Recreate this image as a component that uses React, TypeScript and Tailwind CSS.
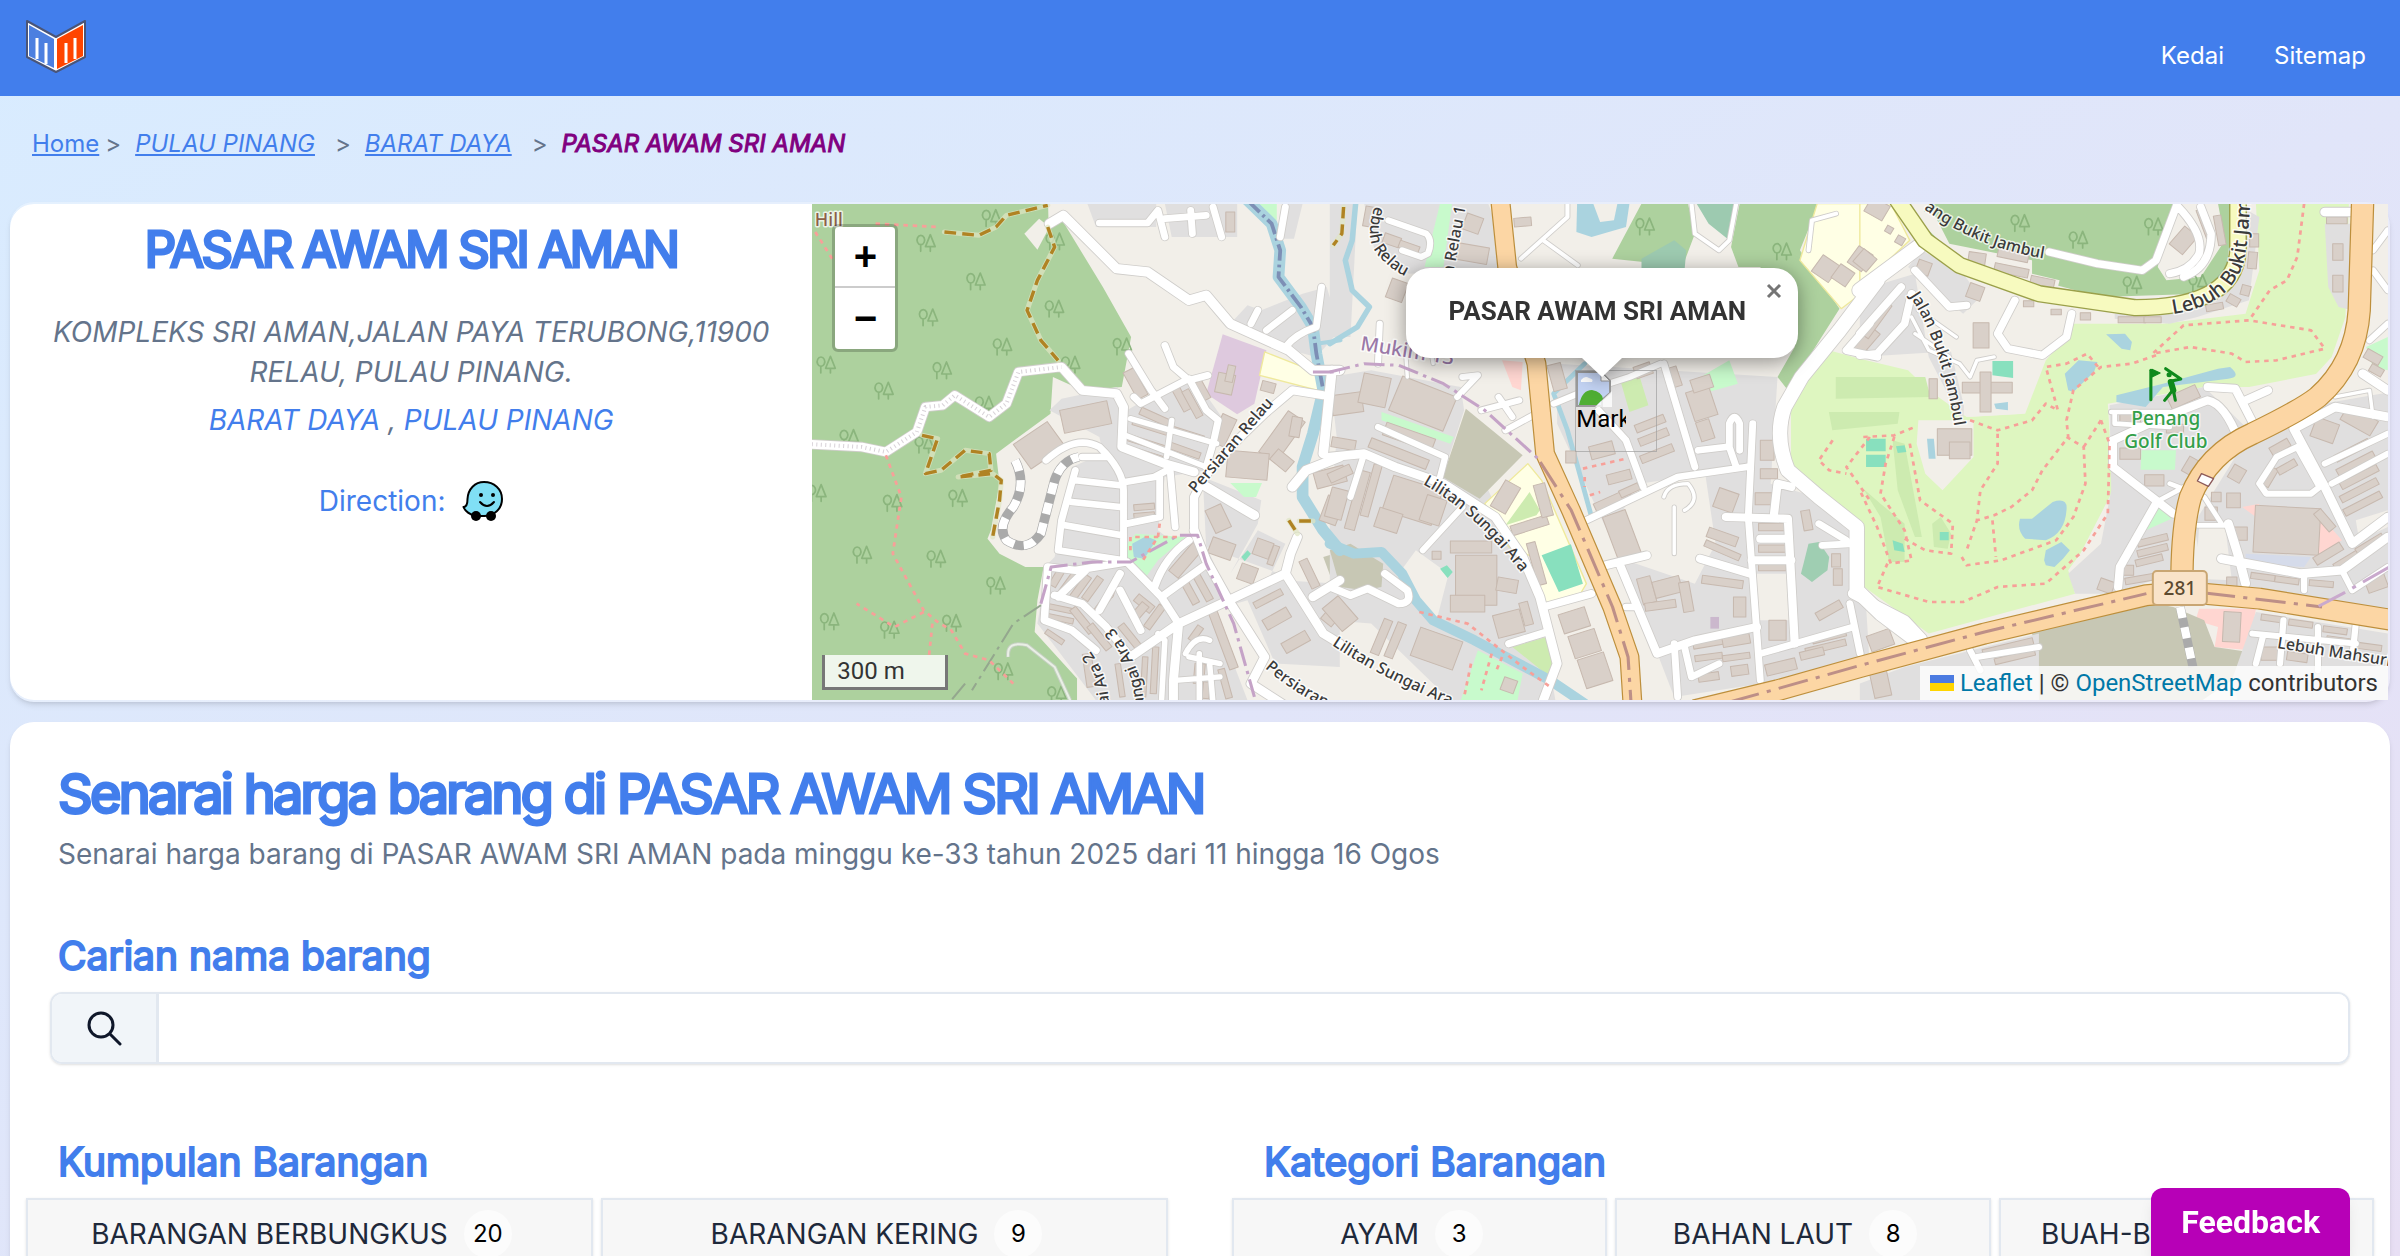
import React, { useState } from 'react';

type Area = { at: number; fill: string; d: string; stroke?: string };
type Road = { at: number; w: number; d: string };
type Block = [number, number, number, number, number];

// The map is drawn in three sheets, side by side
const WEST = 0;
const MID = 1539;
const EAST = 3078;

const FOREST = '#add19e';
const GOLF = '#def6c0';
const HOUSING = '#e0dfdf';
const WATER = '#aad3df';
const PITCH = '#88e0be';
const PARK = '#c8facc';
const GRASS = '#cdebb0';
const SCHOOL = '#ffffe5';
const BROWN = '#c7c7b4';
const RETAIL = '#ffd6d1';

const areas: Area[] = [
  { at: WEST, fill: FOREST, d: 'M0 0H720L722 85L765 95L880 290L962 440L935 590L820 600L735 560L728 670L570 790L580 880L555 1020L545 1045L580 1090L655 1130H708L690 1230L682 1325L805 1465V1560H0Z' },
  { at: WEST, fill: '#f2efe9', d: 'M652 130L695 85L725 110L690 178Z' },
  { at: WEST, fill: HOUSING, d: 'M835 40H1035V110H860ZM1060 40H1270V140H1080ZM1410 40H1460L1435 145H1385ZM1250 400L1300 345L1340 360L1460 310L1530 290L1568 420L1500 500L1390 470Z' },
  { at: WEST, fill: HOUSING, d: 'M725 660L760 625L920 590L950 660L1050 600L1150 570L1225 680L1180 840L1060 860L1040 1020L1090 1060L1160 1020L1250 1230L1400 1170L1568 1180V1430L1380 1420L1300 1230L1200 1260L1300 1530H860L690 1300L720 1120L740 1100L790 830L880 790L870 740Z' },
  { at: WEST, fill: HOUSING, d: 'M1170 860L1340 930L1330 1000L1250 1150L1330 1020L1410 1060L1350 1190L1420 1160L1180 1070Z' },
  { at: WEST, fill: '#dec9de', d: 'M1228 432L1355 480L1320 640L1270 672L1180 610Z' },
  { at: WEST, fill: SCHOOL, d: 'M1350 485L1510 550L1505 600L1335 555Z', stroke: '#efe99c' },
  { at: WEST, fill: PARK, d: 'M1320 40H1385V90L1360 95ZM950 1060L975 1030L1120 1040L1040 1110L1005 1160L950 1100ZM1250 878H1342L1325 920H1290Z' },
  { at: WEST, fill: BROWN, d: 'M1520 1100L1568 1085V1170H1545Z' },
  { at: WEST, fill: WATER, d: 'M965 1060L1005 1038L1035 1050L1000 1105L970 1100Z' },
  { at: WEST, fill: PITCH, d: 'M1282 1100L1300 1080L1310 1090L1292 1113Z' },

  { at: MID, fill: HOUSING, d: 'M100 40H460L530 230L420 240L230 250L130 180ZM0 560L120 540L380 590L390 660L330 850L460 900L600 1200L660 1560H380L120 1300L0 1290V1000L20 740ZM660 520L1300 560L1280 880L1540 960L1568 1430L1000 1520L850 1120L660 700Z' },
  { at: MID, fill: '#f2efe9', d: 'M250 1080L345 1150L310 1290L200 1150ZM900 880L1090 850L1120 1060L1060 1180L860 1110L820 1010ZM1240 1150H1340V1290H1240Z' },
  { at: MID, fill: HOUSING, d: 'M0 40H80L60 440H0Z' },
  { at: MID, fill: PARK, d: 'M320 40H355L330 230H275Z' },
  { at: MID, fill: FOREST, d: 'M905 40H1420L1365 180L1480 355L1330 600L1300 560L1350 470L1250 230H1050L820 205Z' },
  { at: MID, fill: '#f2efe9', d: 'M1040 40H1190L1165 170L1190 240H1020L1060 130Z' },
  { at: MID, fill: '#9dcab0', d: 'M1065 40H1175L1160 150L1100 100ZM905 205L1000 150L1035 180L1030 240H905Z' },
  { at: MID, fill: SCHOOL, d: 'M1415 40H1568V290L1485 355L1365 210Z', stroke: '#efe99c' },
  { at: MID, fill: WATER, d: 'M718 40H870L860 110L760 140L716 125Z' },
  { at: MID, fill: '#f2efe9', d: 'M765 40H835L825 90L785 95Z' },
  { at: MID, fill: BROWN, d: 'M395 655L560 795L435 925L328 860ZM0 1080L60 1060L155 1120L150 1190L100 1200L30 1190Z' },
  { at: MID, fill: SCHOOL, d: 'M575 820L615 870L745 1180L725 1215L620 1245L590 1100L520 1070L450 940Z', stroke: '#efe99c' },
  { at: MID, fill: GRASS, d: 'M580 905L610 960L600 975L510 1005ZM530 1370L630 1340L655 1420L650 1470ZM845 575L900 560L925 645L870 665Z' },
  { at: MID, fill: PITCH, d: 'M615 1095L700 1062L735 1180L665 1205ZM320 1135L340 1125L357 1145L342 1163Z' },
  { at: MID, fill: PARK, d: 'M1085 555L1160 510L1185 580L1100 605ZM150 665L360 740L350 760L150 690ZM430 1380L560 1450L545 1530H380Z' },
  { at: MID, fill: '#9fceb2', d: 'M1390 1060L1420 1055L1450 1100L1445 1140L1400 1175L1368 1150Z' },
  { at: MID, fill: '#cbb8cd', d: 'M1105 1280H1130V1315H1105Z' },
  { at: MID, fill: RETAIL, d: 'M500 510L560 515L555 600L530 590Z' },

  { at: EAST, fill: GOLF, d: 'M-90 480L0 505L140 540L200 600L310 680L470 670L510 510L610 400L880 400L1120 370L1160 240L1150 40H1420L1410 380L1370 500L1290 590L1000 590L720 640L735 900L640 1090L605 1140L625 1210L200 1330L0 1180L-10 1010L-200 880L-200 640Z' },
  { at: EAST, fill: '#cdebb0', d: 'M-70 560L190 560L205 620L-70 625ZM-90 665L115 665L110 700L-80 720ZM95 750L130 760L180 1040H160L110 900ZM10 895L60 940L130 1000V1115H85L60 980ZM210 1000L235 980L265 1030L255 1075L215 1070Z' },
  { at: EAST, fill: FOREST, d: 'M200 40H1085L1060 290L990 310L700 320L480 260L280 180L160 110Z' },
  { at: EAST, fill: '#f2efe9', d: 'M910 40H1040L1060 150L990 260L890 270L865 230ZM150 70L210 60L260 160L500 210L500 250L580 270L570 310L480 280L280 200Z' },
  { at: EAST, fill: SCHOOL, d: 'M0 40H90L145 150L0 290Z', stroke: '#efe99c' },
  { at: EAST, fill: HOUSING, d: 'M140 230L180 180L300 250L350 320L300 370ZM0 300L160 250L200 500L300 700L310 480L0 500ZM1350 100H1430V360L1390 350L1360 290ZM1090 40L1160 80L1130 330L980 380L900 400L740 385L740 370L960 350L1090 280Z' },
  { at: EAST, fill: '#f2efe9', d: 'M395 400L450 320L620 350L610 430L540 510L480 670L310 680L250 420L300 380ZM170 690L330 690L330 800L240 900L190 850L165 760ZM1130 590L1380 540L1300 640L1140 720Z' },
  { at: EAST, fill: HOUSING, d: 'M725 645L1000 590L1130 720L960 830L905 1150L740 1210L625 1210L605 1150L700 1060L730 900Z' },
  { at: EAST, fill: HOUSING, d: 'M1090 800L1290 650L1568 600V1300L1000 1180L970 1000Z' },
  { at: EAST, fill: '#f2efe9', d: 'M985 1010L1060 1000L1080 1170L975 1165ZM1440 990L1533 960V1010L1450 1050Z' },
  { at: EAST, fill: WATER, d: 'M715 432L770 430L790 455L785 480L760 475ZM595 550L635 510L690 515L680 545L620 605L605 600ZM745 615L880 580L1040 535L1075 530Q1110 560 1070 565L880 590L830 650L745 635ZM465 985L500 985L560 935Q605 920 600 960Q595 1030 540 1050L480 1045Q455 1020 465 985ZM535 1110L540 1080L585 1055L610 1080L590 1105L565 1130L540 1125ZM195 745H215L220 805H200ZM390 640L430 635V660L395 655Z' },
  { at: EAST, fill: PITCH, d: 'M385 512H445V563L385 555ZM18 745H75V783H18ZM18 793H75V830H18ZM105 768L130 765L135 785L110 788ZM95 1050L125 1060L130 1085L100 1080ZM232 1025H258V1050H232Z' },
  { at: EAST, fill: PARK, d: 'M818 780H918L915 838H815ZM870 940L905 985L830 1020ZM1470 470L1533 440V540L1490 530Z' },
  { at: EAST, fill: RETAIL, d: 'M985 1255H1150L1130 1380L1030 1370L1040 1310L975 1290ZM1340 980L1400 1050L1320 1100ZM1110 950L1160 940L1150 980Z' },
  { at: EAST, fill: '#d5dbea', d: 'M1120 1090L1310 1100L1290 1130L1120 1120Z' },
  { at: EAST, fill: BROWN, d: 'M500 1325L860 1240L910 1250L1000 1290L1030 1370L1130 1385L1080 1470L980 1540H520Z' },
  { at: EAST, fill: HOUSING, d: 'M130 1430L520 1330V1430L520 1540H0V1480ZM1150 1265L1533 1330V1540H1100L1080 1470Z' },
];

const waterways = [
  { at: WEST, w: 34, d: 'M1300 30L1370 100L1395 180L1390 260L1455 350L1490 410L1500 490L1520 600L1490 730L1460 830L1460 920L1520 1020L1568 1080' },
  { at: WEST, w: 12, d: 'M1500 460L1570 450' },
  { at: MID, w: 16, d: 'M75 40L65 150L45 210L65 300L115 350L80 410L0 460' },
  { at: MID, w: 30, d: 'M0 1060L70 1090L150 1085L210 1150L250 1230L300 1290L420 1350L640 1470L740 1540' },
  { at: MID, w: 14, d: 'M740 520L650 610L690 720L720 830L760 980' },
];

const roads: Road[] = [
  { at: WEST, w: 26, d: 'M35 762L180 770L250 785L340 725L365 650L415 645L450 615L550 680L600 640L635 545L760 530L820 600L920 610L940 650L935 770L1060 820L1145 845' },
  { at: WEST, w: 28, d: 'M725 100L765 75L920 235L1010 245L1130 330L1180 315L1250 400L1420 480L1490 540H1568' },
  { at: WEST, w: 20, d: 'M870 98H1010L1040 60L1060 140M1135 60L1140 130M1200 50L1225 140M1060 85L1180 75M1410 50L1395 140' },
  { at: WEST, w: 20, d: 'M1310 400L1330 360M1355 420L1430 360M1410 470Q1440 430 1500 410L1515 290M1060 465L1085 530L1130 570L1185 555M955 490L1020 600L1060 655M970 620L990 640L1130 565L1180 660L1215 690L1200 760L1180 830' },
  { at: WEST, w: 24, d: 'M1145 1020L1145 920L1165 880L1190 840L1280 740L1350 670L1430 600L1520 615' },
  { at: WEST, w: 28, d: 'M1545 540L1520 790M1430 890L1470 840L1568 800M1165 880L1320 975' },
  { at: WEST, w: 16, d: 'M960 685L1210 760M945 735L1180 830M1080 690L1065 800' },
  { at: WEST, w: 20, d: 'M715 810Q800 730 870 770Q940 840 940 900V1110L750 1080L760 990L800 840M820 800L890 800M800 870L930 885M790 935L930 950M770 1005L935 1035M945 875L1030 860L1075 835L1090 1010M1045 860V980L950 1000' },
  { at: WEST, w: 22, d: 'M720 1130L800 1140L950 1115L1050 1220L1100 1300M720 1130L710 1290L790 1320L860 1380M740 1215L820 1240L890 1310L960 1400M830 1140L750 1220M930 1150L870 1260M930 1200L990 1320M1050 1220L1170 1130M1030 1190Q1060 1100 1130 1050' },
  { at: WEST, w: 26, d: 'M1145 1020L1180 1110L1245 1230L1350 1400L1310 1480L1400 1540M1245 1230L1410 1150L1425 1090L1445 1040M1410 1150L1520 1330L1568 1360M1245 1230L1100 1300L1085 1470V1540M1100 1300L960 1400M1490 1220L1568 1170' },
  { at: WEST, w: 16, d: 'M1120 1390Q1150 1330 1190 1350M1130 1400L1220 1420M1160 1540V1390M1200 1540L1190 1420M1040 1330L1060 1350L1050 1540M1090 1470L1220 1460' },

  { at: MID, w: 18, d: 'M170 90L280 130Q300 150 285 190L265 200L210 180M140 520L145 400' },
  { at: MID, w: 12, d: 'M690 40V80L555 205M620 150L720 225M1050 40L1060 130L1130 180L1160 150L1180 40M1390 180L1400 90L1470 70' },
  { at: MID, w: 26, d: 'M0 800L100 790L190 830L330 880L480 980L560 1100L610 1220L640 1340L660 1420L620 1530' },
  { at: MID, w: 18, d: 'M100 790L60 920M140 710L335 800L320 860M385 950L270 1080M440 660L550 630M490 620L530 680M510 720L590 675M385 560L430 555L370 620M650 640L720 610L870 560L960 520' },
  { at: MID, w: 22, d: 'M0 1190L60 1215L110 1195L200 1240Q240 1240 225 1200L160 1150M620 1250L760 1210M520 1360L630 1325' },
  { at: MID, w: 20, d: 'M780 660L860 750L910 890M970 520L1060 830M1070 780L1150 770M745 990L1010 860L1210 830M1228 700L1215 980L1250 1470M1190 780V700Q1175 660 1160 700V770L1180 830' },
  { at: MID, w: 24, d: 'M800 1125L920 1095M845 1130L950 1390L1060 1350L1240 1310M1150 980L1330 985L1350 1360M1225 1110H1340M1075 1105L1220 1150M1250 1045H1330M1290 970L1300 880L1340 890' },
  { at: MID, w: 20, d: 'M1000 1360L1010 1520M1250 1390L1520 1310M1510 1240L1540 1390M1430 1065L1520 1060M1420 1000L1500 1050M860 1250L890 1250M1030 1370L1050 1460L1130 1420' },
  { at: MID, w: 10, d: 'M1000 1090L1000 950M970 920Q980 880 1040 880Q1080 930 1030 960M300 520L290 460M220 480L225 560' },
  { at: MID, w: 42, d: 'M1590 270L1480 420L1370 560L1320 650Q1290 740 1330 840L1420 920L1530 1010V1200L1600 1270L1690 1340' },
  { at: MID, w: 22, d: 'M1568 400L1500 480L1590 500' },

  { at: EAST, w: 44, d: 'M0 300L170 170' },
  { at: EAST, w: 22, d: 'M0 430L120 290M0 495L50 490L130 400L150 310M160 240L260 350L310 345M450 330L400 430L430 475L530 495L600 440L615 370M900 250Q960 240 985 190Q1000 130 920 45M920 45L860 210L820 240L690 220L550 185M940 260Q1020 230 1020 130L990 50' },
  { at: EAST, w: 24, d: 'M1010 590L1090 595L1145 705M1120 630L1185 600M735 750L860 690L1010 630Q1060 640 1100 750M735 750V830L910 970M860 940L755 1130L750 1190' },
  { at: EAST, w: 14, d: 'M730 665H900M740 700L900 710M900 880L1000 920L1050 1000M980 1005H1070M740 700V665M870 930L960 880' },
  { at: EAST, w: 26, d: 'M1260 715L1350 890L1430 1060L1533 980M1260 715L1380 650L1533 680M1460 550L1533 600M1050 1105L1280 1150L1400 1140L1533 1040M1070 1000L1100 1100L1120 1180M1350 65H1430' },
  { at: EAST, w: 18, d: 'M1160 880L1210 800L1270 770L1335 890L1310 910H1180L1160 880M1350 820L1533 730M1370 880L1533 790M1480 450L1533 400M1490 240L1533 300M1490 180L1533 120M1290 1150V1200M1400 1140L1430 1200L1533 1130' },
  { at: EAST, w: 18, d: 'M1140 1330L1440 1360M1230 1290L1220 1420M1330 1310V1440M1440 1300L1430 1400M1170 1340L1150 1420M320 1380L350 1440M340 1400L520 1370' },
  { at: EAST, w: 10, d: 'M150 380L200 480L290 520L320 560L340 510L390 500M170 360L280 440M160 430L260 500M1380 620L1480 600L1490 680' },
  { at: EAST, w: 30, d: 'M-20 1210L130 1290L180 1345' },
];

// centre x, centre y, width, height, rotation
const westBlocks: Block[] = [
  [695, 765, 120, 90, -35], [830, 680, 140, 70, -12], [975, 580, 34, 90, -28], [1030, 680, 90, 22, 25], [1020, 710, 110, 20, 18],
  [1010, 760, 120, 20, 18], [1000, 790, 110, 18, 18], [1120, 730, 110, 20, 18], [1115, 780, 100, 20, 20], [1105, 620, 24, 90, -28],
  [1140, 640, 22, 90, -28], [1170, 600, 22, 60, -28], [1230, 720, 45, 90, 25], [1235, 580, 50, 60, 12], [1250, 550, 22, 50, 12],
  [1360, 590, 40, 30, 15], [1400, 740, 60, 150, 35], [1440, 710, 30, 60, 10], [1300, 825, 120, 80, 5], [1400, 810, 60, 40, 40],
  [1540, 860, 90, 50, -15], [1545, 960, 50, 80, 20], [1215, 985, 50, 75, -25], [1225, 1075, 70, 50, 20], [1345, 1075, 50, 50, 20],
  [1300, 1150, 50, 50, 20], [1375, 1095, 18, 60, 20], [1360, 1225, 90, 20, -28], [1385, 1285, 80, 34, -30], [1440, 1355, 80, 34, -30],
  [1480, 1150, 26, 90, -25], [1550, 1270, 40, 70, 40], [780, 1180, 22, 70, 35], [815, 1190, 22, 80, 35], [850, 1195, 22, 80, 35],
  [745, 1165, 22, 50, 30], [880, 1240, 22, 80, 35], [910, 1190, 18, 60, 20], [1000, 1240, 60, 26, 40], [985, 1265, 26, 60, 40],
  [755, 1255, 80, 16, 12], [755, 1285, 80, 16, 12], [820, 1290, 22, 90, -38], [870, 1340, 22, 90, -38], [960, 1340, 22, 90, -38],
  [1030, 1280, 22, 80, 35], [1000, 950, 60, 18, -5], [1000, 975, 60, 16, -5], [1120, 1110, 36, 110, 40], [1130, 1200, 22, 90, -28],
  [1170, 1190, 22, 90, -28], [1230, 1350, 26, 180, -20], [1150, 1330, 20, 50, 35], [1250, 95, 26, 60, 0], [1235, 1480, 20, 90, -15],
  [1160, 1450, 30, 60, 5], [1030, 1440, 18, 140, 3], [1000, 1460, 16, 120, 3], [930, 1470, 16, 100, -8], [840, 1440, 26, 100, -8],
  [740, 1340, 60, 16, 35], [1180, 1500, 20, 50, 5],
];
const midBlocks: Block[] = [
  [50, 640, 90, 60, -8], [130, 600, 80, 90, 12], [270, 640, 170, 110, 22], [230, 740, 150, 40, 20], [40, 760, 70, 30, 10],
  [200, 790, 180, 30, 22], [30, 850, 70, 30, -25], [20, 940, 50, 90, 15], [80, 930, 30, 180, 15], [120, 900, 24, 160, 15],
  [240, 930, 150, 110, 18], [170, 990, 70, 60, 18], [300, 960, 60, 80, 18], [410, 1070, 120, 36, 0], [425, 1170, 120, 150, 0],
  [400, 1240, 100, 50, 0], [515, 1185, 60, 40, 10], [520, 1300, 80, 70, -15], [570, 1270, 26, 70, -15], [310, 1375, 130, 90, 20],
  [150, 1340, 26, 110, 22], [190, 1350, 26, 110, 22], [30, 1270, 60, 90, -40], [510, 920, 50, 90, 30], [580, 1005, 110, 30, -18],
  [620, 930, 34, 100, -15], [600, 1120, 26, 130, -15], [710, 1290, 80, 60, -18], [740, 1360, 80, 70, -18], [770, 1440, 80, 90, -18],
  [850, 1040, 70, 150, -20], [920, 1200, 40, 80, -15], [980, 1190, 80, 50, -15], [1035, 1220, 30, 90, -10],
  [960, 1245, 90, 24, -8], [820, 930, 110, 26, -25], [840, 860, 70, 30, -15], [790, 780, 70, 40, -15], [930, 700, 90, 24, -22],
  [940, 740, 90, 24, -22], [950, 790, 100, 24, -22], [870, 900, 60, 22, -25], [1080, 640, 70, 90, -18], [1080, 580, 60, 40, -18],
  [1090, 720, 40, 60, -18], [1000, 560, 30, 60, -18], [1270, 780, 40, 60, 0], [1275, 850, 50, 30, 0], [1260, 925, 50, 36, 0],
  [1285, 1010, 80, 22, 0], [1285, 1075, 80, 22, 0], [1285, 1130, 80, 22, 0], [1300, 1320, 50, 60, 0], [1190, 1250, 36, 60, 0],
  [1140, 1080, 110, 20, 24], [1140, 1040, 90, 30, 20], [1140, 1175, 120, 24, 8], [1150, 930, 60, 60, 20], [1385, 990, 26, 60, -10],
  [1470, 1110, 26, 40, 0], [1475, 1160, 26, 50, 0], [1450, 1260, 80, 26, -30], [1440, 1370, 120, 20, -14], [1450, 1340, 100, 18, -14],
  [1100, 1360, 90, 18, -10], [1180, 1350, 80, 30, -10], [1100, 1400, 80, 18, -8], [1180, 1400, 80, 18, -8], [1310, 1430, 90, 34, -14],
  [1400, 1390, 70, 24, -14], [1190, 1440, 50, 30, -8], [1100, 1460, 60, 24, -8], [1440, 235, 60, 60, 35], [1490, 255, 50, 50, 35],
  [1540, 205, 50, 60, 35], [415, 100, 50, 50, 20], [415, 190, 90, 50, 10], [180, 150, 50, 30, 20], [230, 170, 60, 22, 20],
  [560, 95, 50, 26, -5], [195, 300, 50, 60, 20], [120, 80, 40, 60, 10], [1550, 450, 50, 90, 40], [520, 1485, 40, 40, 20],
  [310, 1095, 26, 24, 0], [700, 800, 30, 36, 0], [660, 560, 40, 80, -15], [910, 540, 50, 36, -20],
];
const eastBlocks: Block[] = [
  [50, 55, 60, 50, 30], [85, 118, 20, 20, 30], [117, 150, 24, 24, 30], [15, 210, 50, 50, 40], [185, 232, 40, 40, 20],
  [335, 305, 44, 44, 20], [340, 205, 50, 36, 8], [445, 195, 90, 26, 12], [440, 240, 100, 26, 12], [530, 275, 70, 26, 12],
  [352, 435, 46, 76, 0], [370, 592, 145, 32, 0], [365, 605, 32, 120, 0], [213, 595, 24, 60, 0], [275, 755, 100, 80, 0],
  [290, 780, 60, 50, 0], [655, 378, 30, 22, 0], [790, 388, 80, 18, 0], [850, 388, 50, 18, 0], [940, 150, 50, 70, 40],
  [1045, 120, 22, 90, -10], [1000, 100, 18, 90, -20], [1145, 150, 26, 40, 0], [1140, 210, 26, 50, 5], [1120, 300, 26, 30, 15],
  [1085, 330, 36, 26, 30], [1030, 350, 50, 20, -10], [490, 340, 30, 18, 0], [570, 365, 30, 16, 0], [1385, 90, 60, 20, 0],
  [1388, 185, 30, 50, 0], [1388, 280, 30, 50, 0], [940, 620, 90, 40, -25], [785, 690, 60, 36, 0], [785, 790, 60, 34, 0],
  [855, 870, 56, 34, 0], [915, 715, 50, 26, 0], [965, 830, 44, 50, 30], [1095, 850, 40, 44, 30], [1035, 920, 28, 28, 0],
  [1085, 930, 40, 44, 0], [1020, 970, 36, 40, 0], [850, 1050, 90, 20, -14], [850, 1080, 90, 20, -14], [840, 1110, 80, 20, -14],
  [820, 1165, 100, 20, -10], [715, 1187, 44, 36, 20], [1240, 1020, 190, 140, 3], [1360, 1090, 90, 26, -32], [1350, 990, 70, 26, 50],
  [1100, 1030, 50, 40, 0], [1450, 690, 100, 50, 30], [1350, 720, 70, 60, 20], [1220, 770, 60, 26, -30], [1080, 1310, 50, 90, 3],
  [1200, 1285, 70, 18, 8], [1280, 1300, 70, 18, 8], [1380, 1320, 70, 18, 8], [1190, 1390, 50, 40, 0], [1270, 1400, 60, 26, 8],
  [1390, 1350, 70, 18, 8], [1480, 1370, 70, 18, 8], [1430, 1100, 120, 22, -32], [1480, 1060, 90, 18, -32], [1430, 780, 110, 22, -28],
  [1440, 820, 120, 22, -28], [1450, 860, 120, 22, -28], [1450, 900, 120, 22, -28], [1460, 940, 120, 22, -28], [1340, 1180, 70, 18, 5],
  [1240, 1170, 70, 18, 8], [1170, 1160, 70, 18, 8], [1490, 500, 50, 30, 30], [1500, 540, 40, 24, 30], [60, 1350, 70, 50, -20],
  [430, 1370, 150, 20, -14], [450, 1400, 120, 18, -14], [60, 1480, 50, 80, -12], [1080, 1180, 30, 40, 0], [50, 390, 22, 120, 35],
  [1190, 860, 24, 60, 30], [1240, 830, 60, 22, -30], [780, 1140, 30, 30, 0], [1500, 1180, 60, 40, -20],
];

const trunk = [
  { at: EAST, w: 68, d: 'M1460 30L1450 360Q1440 520 1330 620Q1280 660 1140 730Q1010 790 960 920Q935 1010 935 1180' },
  { at: MID, w: 58, d: 'M495 30L515 230L600 520L625 790L700 960L820 1250L870 1400L880 1560' },
  { at: MID, w: 66, d: 'M1060 1560L1300 1500L1540 1430L1900 1330L2370 1215L2480 1205L2700 1225L3120 1295' },
];

const boundary = [
  { at: WEST, d: 'M700 1240L730 1130L850 1115L960 1115L1100 1035H1155L1180 1120L1260 1300L1320 1520M1490 545L1568 545' },
  { at: MID, d: 'M0 545L100 520L200 525L330 580L450 660L610 810' },
];

const redPaths = [
  { at: WEST, d: 'M45 125L100 215M220 100L400 110M250 795L295 920L270 1090L360 1260L400 1295L440 1320L480 1390L550 1410L620 1480M360 1265L275 1310L165 1240M385 1300L375 1400M960 1080L960 1040L1100 1040M1045 1000L1040 1040L990 1120' },
  { at: MID, d: 'M735 835L860 805M740 860L740 890M755 915L785 905M260 1265L400 1300L560 1430L640 1490M470 1390L440 1500M410 1420L390 1520M500 1400L480 1450M1460 750L1420 810L1450 840L1500 850M1568 740L1500 830L1568 930' },
  { at: EAST, d: 'M1290 40L1270 200L1240 270L1190 300L1130 390L940 405L850 490L960 470L1080 490L1120 515L1210 510L1350 475L1310 420L1130 390M860 495L790 520L700 530L620 600L600 690L605 740L530 840L500 900L440 950L390 975L340 990M600 740L650 770L655 880L620 980L570 1050L410 1110L310 1125L290 1090M320 690L400 720L500 690L540 640L575 660L540 530L600 520L660 490L700 540M400 730V820L350 900L340 990L310 1080M700 690L725 760L720 970L650 1080L540 1180L400 1190L300 1235H200L50 1190L80 1120M10 740L100 735L160 710M145 760L175 930L270 1000L265 1090L190 1080L130 1045M100 740L75 820L60 910L130 1020L150 1110L90 1120L50 1010L0 900M385 990L395 1100M700 690L650 770' },
];

const brownPaths = [
  { at: WEST, d: 'M420 125L520 135L570 110L600 75L660 60L720 45M720 110L740 170L690 270L660 360L700 450L750 510M355 735L400 745L365 850L410 840L480 780L550 790L555 840L460 860L560 850L585 870L580 930L560 1040M1420 990L1445 1030M1450 992H1490' },
  { at: MID, d: 'M40 50L35 130L10 165' },
];

const trees = [
  [365, 155], [510, 270], [372, 378], [738, 352], [587, 466], [75, 520], [412, 537], [243, 598], [785, 520], [458, 920],
  [268, 935], [180, 1090], [395, 1102], [568, 1182], [85, 1290], [260, 1315], [745, 1510], [440, 1295], [48, 905], [142, 740], [740, 150],
  [935, 465], [555, 80], [360, 760], [535, 640], [590, 1440], [2453, 105], [2851, 180], [3542, 95], [3711, 145], [3868, 280], [4059, 275], [3930, 105],
];

const labels = [
  { id: 'l1', d: 'M384 290L470 190', text: 'Persiaran Relau', size: 16 },
  { id: 'l2', d: 'M297 500Q296 465 271 438', text: 'ai Ara 2', size: 16 },
  { id: 'l3', d: 'M332 502Q331 460 297 418', text: 'angai Ara 3', size: 16 },
  { id: 'l4', d: 'M453 464Q490 496 540 515', text: 'Persiaran', size: 16 },
  { id: 'l5', d: 'M611 280Q665 310 712 372', text: 'Lilitan Sungai Ara', size: 16 },
  { id: 'l6', d: 'M520 441Q575 478 660 510', text: 'Lilitan Sungai Ara', size: 16 },
  { id: 'l7', d: 'M563 2Q550 40 572 57Q586 72 610 78', text: 'ebuh Relau', size: 16 },
  { id: 'l8', d: 'M641 72L654 2', text: 'n Relau 1', size: 16 },
  { id: 'l9', d: 'M1112 5Q1170 48 1250 57', text: 'ang Bukit Jambul', size: 16 },
  { id: 'l10', d: 'M1098 92Q1130 140 1143 225', text: 'Jalan Bukit Jambul', size: 16 },
  { id: 'l11', d: 'M1361 110Q1418 102 1432 58Q1438 30 1440 -40', text: 'Lebuh Bukit Jam', size: 20 },
  { id: 'l12', d: 'M1465 444L1590 464', text: 'Lebuh Mahsuri', size: 16 },
];

const Blocks = ({ at, items }: { at: number; items: Block[] }) => (
  <g transform={`translate(${at} 0)`} fill="#d9d0c9" stroke="#c7b9af" strokeWidth="3">
    {items.map(([x, y, w, h, r], i) => (
      <rect key={i} x={x - w / 2} y={y - h / 2} width={w} height={h} transform={`rotate(${r} ${x} ${y})`} />
    ))}
  </g>
);

const StreetMap = () => (
  <svg viewBox="0 0 1576 496" preserveAspectRatio="xMidYMid slice" className="absolute inset-0 h-full w-full bg-[#f2efe9]" aria-hidden="true">
    <g transform="scale(.3444 .3333) translate(-35 -41)" strokeLinecap="round" strokeLinejoin="round">
      {areas.map((a, i) => (
        <path key={i} d={a.d} fill={a.fill} stroke={a.stroke} strokeWidth="4" transform={`translate(${a.at} 0)`} />
      ))}
      <g fill="none" stroke="#8bb57d" strokeWidth="5">
        {trees.map(([x, y], i) => (
          <path key={i} d={`M${x - 14} ${y + 28}V${y + 8}M${x - 14} ${y + 8}a11 14 0 1 1 1 0M${x + 14} ${y + 28}V${y + 14}M${x + 14} ${y - 22}L${x + 28} ${y + 14}H${x}Z`} />
        ))}
      </g>
      <g fill="none" stroke={WATER}>
        {waterways.map((r, i) => (
          <path key={i} d={r.d} strokeWidth={r.w} transform={`translate(${r.at} 0)`} />
        ))}
      </g>
      <path d="M1300 30L1370 100L1395 180L1390 260L1455 350L1490 410L1500 490L1520 600" fill="none" stroke="#7d8fb5" strokeWidth="11" strokeLinecap="butt" strokeDasharray="50 12 8 12" />
      <Blocks at={WEST} items={westBlocks} />
      <Blocks at={MID} items={midBlocks} />
      <Blocks at={EAST} items={eastBlocks} />
      <g fill="none" stroke="#cfcdca">
        {roads.map((r, i) => (
          <path key={i} d={r.d} strokeWidth={r.w + 5} transform={`translate(${r.at} 0)`} />
        ))}
      </g>
      <g fill="none" stroke="#fff">
        {roads.map((r, i) => (
          <path key={i} d={r.d} strokeWidth={r.w} transform={`translate(${r.at} 0)`} />
        ))}
      </g>
      {/* unpaved track and roads under construction */}
      <path d="M35 762L180 770L250 785L340 725L365 650L415 645L450 615L550 680L600 640L635 545L760 530" fill="none" stroke="#d8d2d8" strokeWidth="12" strokeLinecap="butt" strokeDasharray="3 10" />
      <g fill="none" strokeLinecap="butt">
        <path d="M625 810Q660 880 620 950Q570 1010 600 1050Q660 1090 700 1030L740 870Q760 810 810 800" stroke="#aaa" strokeWidth="28" />
        <path d="M625 810Q660 880 620 950Q570 1010 600 1050Q660 1090 700 1030L740 870Q760 810 810 800" stroke="#fff" strokeWidth="24" strokeDasharray="34 28" />
        <path d="M4008 1250L4045 1430" stroke="#aaa" strokeWidth="26" />
        <path d="M4008 1250L4045 1430" stroke="#fff" strokeWidth="24" strokeDasharray="34 28" />
        <path d="M605 1400Q600 1350 660 1365L740 1430L785 1530" stroke="#c4cfc0" strokeWidth="12" />
        <path d="M605 1400Q600 1350 660 1365L740 1430L785 1530" stroke="#e9efe5" strokeWidth="6" />
      </g>
      <g transform="translate(3078 0)" fill="none">
        <path d="M110 30L190 150L290 225L520 310L800 352Q1090 350 1098 180V30" stroke="#9ba04a" strokeWidth="52" />
        <path d="M110 30L190 150L290 225L520 310L800 352Q1090 350 1098 180V30" stroke="#f7fabf" strokeWidth="44" />
      </g>
      <g fill="none" stroke="#bd8f3c" strokeLinecap="butt">
        {trunk.map((r, i) => (
          <path key={i} d={r.d} strokeWidth={r.w} transform={`translate(${r.at} 0)`} />
        ))}
      </g>
      <g fill="none" stroke="#fcd6a4">
        {trunk.map((r, i) => (
          <path key={i} d={r.d} strokeWidth={r.w - 7} transform={`translate(${r.at} 0)`} />
        ))}
      </g>
      <g fill="none" stroke="#bd8f87" strokeWidth="9" strokeLinecap="butt" strokeDasharray="88 24 12 24">
        <path d="M2150 815L2240 960L2360 1250L2405 1400L2415 1560M2700 1535L2840 1495L3080 1425L3440 1325L3910 1210M4080 1208L4420 1250" />
        <path d="M4410 1248L4480 1210L4615 1130" stroke="#c9a9cd" />
      </g>
      <g fill="none" stroke="#c5a3c7" strokeWidth="9" strokeLinecap="butt" strokeDasharray="60 16 10 16">
        {boundary.map((b, i) => (
          <path key={i} d={b.d} transform={`translate(${b.at} 0)`} />
        ))}
        <path d="M700 1245L620 1300L560 1400L500 1500M480 1480L440 1530" stroke="#94a78e" strokeWidth="6" />
      </g>
      <g fill="none" stroke="#f7a099" strokeWidth="8" strokeLinecap="butt" strokeDasharray="13 14">
        {redPaths.map((b, i) => (
          <path key={i} d={b.d} transform={`translate(${b.at} 0)`} />
        ))}
      </g>
      <g fill="none" stroke="#dfe5c3" strokeOpacity=".7" strokeWidth="15">
        {brownPaths.map((b, i) => (
          <path key={i} d={b.d} transform={`translate(${b.at} 0)`} />
        ))}
      </g>
      <g fill="none" stroke="#b08323" strokeWidth="10" strokeLinecap="butt" strokeDasharray="34 18">
        {brownPaths.map((b, i) => (
          <path key={i} d={b.d} transform={`translate(${b.at} 0)`} />
        ))}
      </g>
      {/* golfer */}
      <g transform="translate(3078 0)" fill="none" stroke="#0f8a1c" strokeWidth="9">
        <path d="M845 628V540" />
        <path d="M848 537L872 548L848 560Z" fill="#0f8a1c" strokeWidth="3" />
        <path d="M888 535L932 566L905 572L910 598L885 630M910 598L916 630" />
        <path d="M903 575L910 600" strokeWidth="18" />
        <circle cx="898" cy="553" r="5" fill="#0f8a1c" strokeWidth="5" />
      </g>
      <path d="M4070 850L4105 865L4090 888L4058 872Z" fill="#fff" stroke="#8c5a5a" strokeWidth="4" />
    </g>

    <g fontFamily="'Noto Sans', sans-serif" fontWeight="500" fill="#3a3a3a" stroke="#fff" strokeWidth="3" strokeOpacity=".75" strokeLinejoin="round" paintOrder="stroke">
      {labels.map((l) => (
        <React.Fragment key={l.id}>
          <path id={l.id} d={l.d} fill="none" stroke="none" />
          <text fontSize={l.size}>
            <textPath href={`#${l.id}`}>{l.text}</textPath>
          </text>
        </React.Fragment>
      ))}
      <text x="3" y="22" fontSize="18" fill="#8d6047">Hill</text>
      <text x="548" y="146" fontSize="20" fill="#9a78a8" transform="rotate(9 548 146)">Mukim 13</text>
      <g textAnchor="middle" fontSize="19" fill="#33a04a">
        <text x="1354" y="221">Penang</text>
        <text x="1354" y="244">Golf Club</text>
      </g>
    </g>
    <rect x="1341" y="367" width="54" height="34" rx="4" fill="#f9e3c9" stroke="#c9a673" strokeWidth="2" />
    <text x="1368" y="391" textAnchor="middle" fontSize="19" fontFamily="'Noto Sans', sans-serif" fontWeight="500" fill="#5c4a30">281</text>
  </svg>
);

const Logo = () => (
  <svg viewBox="0 0 60 54" className="h-[54px] w-[60px]" role="img" aria-label="Logo">
    <path d="M1 1L30 17L59 1V37L30 52L1 37Z" fill="#fff" stroke="#4a5578" strokeWidth="2" strokeLinejoin="round" />
    <path d="M3 5L28 19V48L3 36Z" fill="#4c7fe0" />
    <path d="M31 19L57 5V36L31 49Z" fill="#ff4500" />
    <path d="M10 38V18L28 27M19 43V23" fill="none" stroke="#fff" strokeWidth="0" />
    <path d="M11 39V18M20 44V23M40 43V23M49 39V18" fill="none" stroke="#fff" strokeWidth="3" />
  </svg>
);

const WazeIcon = () => (
  <svg viewBox="0 0 42 42" className="h-[42px] w-[42px]" role="img" aria-label="Waze">
    <path d="M22 2C32 2 40 9 40 19C40 29 32 36 22 36H14C8 35 3 31 1.500 27C5 27 5.500 24 5.500 19C6 9 13 2 22 2Z" fill="#80dff5" stroke="#000" strokeWidth="2" strokeLinejoin="round" />
    <circle cx="14" cy="36" r="5" />
    <circle cx="29" cy="36" r="5" />
    <circle cx="19" cy="15" r="2" />
    <circle cx="31" cy="15" r="2" />
    <path d="M18 22Q25 30 32 22" fill="none" stroke="#000" strokeWidth="2" strokeLinecap="round" />
  </svg>
);

const SearchIcon = () => (
  <svg viewBox="0 0 36 36" className="h-9 w-9" fill="none" stroke="#0f172a" strokeLinecap="round" aria-hidden="true">
    <circle cx="15" cy="15" r="12" strokeWidth="3" />
    <path d="M24 24L34 34" strokeWidth="3" />
  </svg>
);

const BrokenImage = () => (
  <svg viewBox="0 0 36 36" className="h-9 w-9" aria-hidden="true">
    <path d="M1 1H25L34 10V22L26 29V35H1Z" fill="#c3d3f3" stroke="#9a9a9a" strokeWidth="2" />
    <path d="M25 1V10H34Z" fill="#fff" stroke="#9a9a9a" strokeWidth="1" />
    <path d="M5 9Q9 4 13 7Q18 8 16 11H5Z" fill="#fff" />
    <path d="M3 34Q6 19 16 19Q26 21 27 28L21 34Z" fill="#4fae33" />
    <path d="M36 20L19 36H36Z" fill="#fff" fillOpacity=".8" />
  </svg>
);

const groups = [
  { name: 'BARANGAN BERBUNGKUS', count: 20 },
  { name: 'BARANGAN KERING', count: 9 },
];

const categories = [
  { name: 'AYAM', count: 3 },
  { name: 'BAHAN LAUT', count: 8 },
  { name: 'BUAH-BUAHAN', count: 8 },
];

const Tile = ({ name, count }: { name: string; count: number }) => (
  <button className="flex items-center justify-center gap-4 border-2 border-[#e2e8f0] bg-[#f7f7f7] pt-2.5 pr-4 pb-1 text-[28px] leading-10 text-[#1e293b] shadow-sm">
    <span>{name}</span>
    <span className="flex h-12 w-12 items-center justify-center rounded-full bg-[#fcfcfc] text-2xl text-black">{count}</span>
  </button>
);

export default function App() {
  const [term, setTerm] = useState('');
  const [popupOpen, setPopupOpen] = useState(true);

  return (
    <div className="min-h-screen bg-linear-to-br from-[#d8ecff] to-[#e8dff4] font-['Inter',sans-serif] text-[#64748b]">
      <header className="flex h-24 items-center justify-between bg-[#427eec] pr-[34px] pl-[26px]">
        <a href="#home" className="-mt-0.5">
          <Logo />
        </a>
        <nav className="flex gap-[50px] pt-4 text-2xl text-white">
          <a href="#kedai">Kedai</a>
          <a href="#sitemap">Sitemap</a>
        </nav>
      </header>

      {/* Breadcrumb */}
      <nav className="flex h-[106px] items-center px-8 pb-2.5 text-2xl" aria-label="Breadcrumb">
        <a href="#home" className="text-[#427eec] underline">Home</a>
        <span className="mr-3.5 ml-1.5">&gt;</span>
        <a href="#pulau-pinang" className="text-[#427eec] italic underline">PULAU PINANG</a>
        <span className="mr-3.5 ml-5">&gt;</span>
        <a href="#barat-daya" className="text-[#427eec] italic underline">BARAT DAYA</a>
        <span className="mr-3.5 ml-5">&gt;</span>
        <span className="text-[#800080] italic [-webkit-text-stroke:1px]">PASAR AWAM SRI AMAN</span>
      </nav>

      <main className="flex flex-col gap-5 px-2.5">
        {/* Shop and map */}
        <section className="grid grid-cols-[803fr_1577fr] rounded-3xl border-y-2 border-r-2 border-white/30 bg-clip-padding shadow-md">
          <div className="flex min-h-[496px] flex-col items-center rounded-l-3xl bg-white px-8 pt-4 text-center">
            <h1 className="text-[49px] leading-[60px] tracking-tighter text-[#427eec] [-webkit-text-stroke:3px]">PASAR AWAM SRI AMAN</h1>
            <p className="mt-8 text-[28px] leading-10 italic">KOMPLEKS SRI AMAN,JALAN PAYA TERUBONG,11900 RELAU, PULAU PINANG.</p>
            <p className="mt-2 text-[28px] leading-10 italic">
              <a href="#barat-daya" className="text-[#427eec]">BARAT DAYA</a> , <a href="#pulau-pinang" className="text-[#427eec]">PULAU PINANG</a>
            </p>
            <div className="mt-10 flex items-center gap-4 text-[28px] text-[#427eec]">
              <span>Direction:</span>
              <a href="#waze">
                <WazeIcon />
              </a>
            </div>
          </div>

          <div className="relative overflow-hidden font-['Roboto',sans-serif] text-2xl text-[#333]">
            <StreetMap />

            {/* Zoom control */}
            <div className="absolute top-5 left-5 flex flex-col rounded-md border-3 border-black/20 bg-clip-padding font-['Liberation_Sans',sans-serif] text-black">
              <button className="flex h-[61px] w-[60px] items-center justify-center rounded-t border-b-2 border-[#ccc] bg-white text-[40px] font-bold" aria-label="Zoom in">+</button>
              <button className="flex h-[61px] w-[60px] items-center justify-center rounded-b bg-white text-[40px] font-bold" aria-label="Zoom out">−</button>
            </div>

            <div className="absolute bottom-2.5 left-2.5 w-[126px] border-3 border-t-0 border-[#777] bg-white/80 px-3 text-2xl leading-8">300 m</div>

            {/* Marker */}
            <div className="absolute top-[166px] left-[763px] h-[82px] w-[82px] border border-[#a0a0a0]/70">
              <BrokenImage />
              <div className="-mt-1 w-[50px] overflow-hidden leading-8 text-black">Marker</div>
            </div>

            {popupOpen && (
              <div className="absolute top-16 left-[594px] w-[392px] drop-shadow-[0_4px_10px_rgba(0,0,0,0.4)]">
                <div className="rounded-3xl bg-white pt-[22px] pr-2.5 pb-[26px] text-center text-[26px] leading-[42px] font-bold">
                  PASAR AWAM SRI AMAN
                </div>
                <svg viewBox="0 0 40 20" className="mx-auto h-5 w-10" aria-hidden="true">
                  <path d="M0 0H40L20 19Z" fill="#fff" />
                </svg>
                <button onClick={() => setPopupOpen(false)} className="absolute top-1 right-3 h-8 w-6" aria-label="Close popup">
                  <svg viewBox="0 0 24 24" className="h-6 w-6" aria-hidden="true">
                    <path d="M6 9L18 21M18 9L6 21" stroke="#757575" strokeWidth="3" />
                  </svg>
                </button>
              </div>
            )}

            <div className="absolute right-0 bottom-0 flex items-center bg-white/80 px-2.5 text-2xl leading-[34px] whitespace-pre">
              <svg viewBox="0 0 24 16" className="mr-1.5 h-4 w-6" aria-hidden="true">
                <path d="M0 0H24V8H0Z" fill="#4c7be1" />
                <path d="M0 8H24V16H0Z" fill="#ffd500" />
              </svg>
              <a href="#leaflet" className="text-[#0078a8]">Leaflet</a>
              <span> | © </span>
              <a href="#osm" className="text-[#0078a8]">OpenStreetMap</a>
              <span> contributors</span>
            </div>
          </div>
        </section>

        {/* Prices */}
        <section className="rounded-t-3xl bg-white pt-10 shadow-md">
          <h2 className="px-12 text-[54px] leading-16 tracking-tighter text-[#427eec] [-webkit-text-stroke:3px]">Senarai harga barang di PASAR AWAM SRI AMAN</h2>
          <p className="mt-2 px-12 text-[28px] leading-10">Senarai harga barang di PASAR AWAM SRI AMAN pada minggu ke-33 tahun 2025 dari 11 hingga 16 Ogos</p>

          <label htmlFor="carian" className="mt-[58px] block px-12 text-[39px] leading-12 text-[#427eec] [-webkit-text-stroke:2px]">Carian nama barang</label>
          <div className="mx-10 mt-3 flex h-[72px] overflow-hidden rounded-xl border-2 border-[#e2e8f0] shadow-sm">
            <div className="flex w-[107px] items-center justify-center border-r-3 border-[#e2e8f0] bg-[#f1f5f9]">
              <SearchIcon />
            </div>
            <input
              id="carian"
              type="text"
              value={term}
              onChange={(e) => setTerm(e.target.value)}
              className="flex-1 bg-white px-4 text-[28px] focus:outline-none"
            />
          </div>

          <div className="mt-[74px] grid grid-cols-2 gap-16 px-4">
            <div>
              <h3 className="px-8 text-[39px] leading-12 text-[#427eec] [-webkit-text-stroke:2px]">Kumpulan Barangan</h3>
              <div className="mt-3 grid grid-cols-2 gap-2">
                {groups.map((g) => (
                  <Tile key={g.name} name={g.name} count={g.count} />
                ))}
              </div>
            </div>
            <div>
              <h3 className="px-8 text-[39px] leading-12 text-[#427eec] [-webkit-text-stroke:2px]">Kategori Barangan</h3>
              <div className="mt-3 grid grid-cols-3 gap-2">
                {categories.map((c) => (
                  <Tile key={c.name} name={c.name} count={c.count} />
                ))}
              </div>
            </div>
          </div>
        </section>
      </main>

      <button className="fixed right-[50px] bottom-0 h-[68px] rounded-t-xl bg-[#b700b7] px-[30px] font-['Roboto',sans-serif] text-[32px] font-bold text-white shadow-lg">Feedback</button>
    </div>
  );
}
